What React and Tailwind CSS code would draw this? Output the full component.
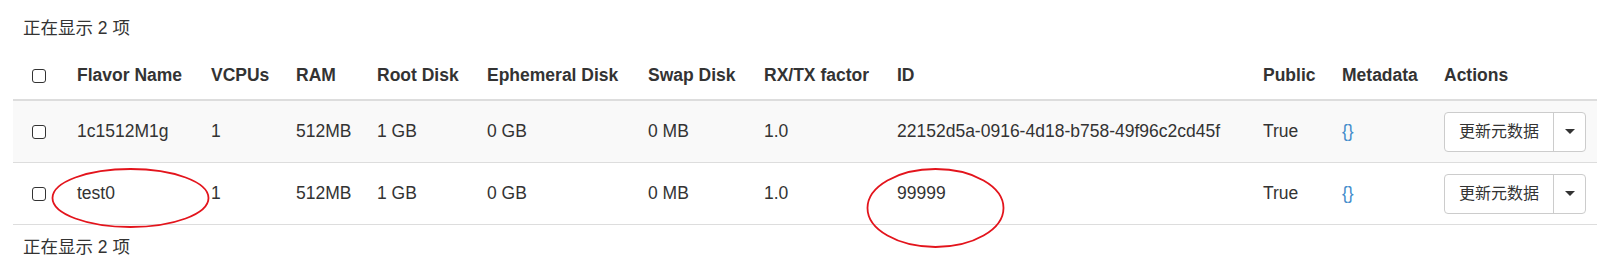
import React from 'react';

const flavors = [
  { name: '1c1512M1g', vcpus: '1', ram: '512MB', root: '1 GB', eph: '0 GB', swap: '0 MB', rxtx: '1.0', id: '22152d5a-0916-4d18-b758-49f96c2cd45f', pub: 'True' },
  { name: 'test0', vcpus: '1', ram: '512MB', root: '1 GB', eph: '0 GB', swap: '0 MB', rxtx: '1.0', id: '99999', pub: 'True' },
];

const Checkbox = () => (
  <span className="inline-block w-[14px] h-[14px] border border-[#333] rounded-[3px] bg-white align-middle" />
);

const headers = ['Flavor Name', 'VCPUs', 'RAM', 'Root Disk', 'Ephemeral Disk', 'Swap Disk', 'RX/TX factor', 'ID', 'Public', 'Metadata', 'Actions'];

export default function App() {
  return (
    <div
      className="relative w-[1597px] h-[259px] bg-white text-[#333] text-[17.5px] leading-[25px] overflow-hidden"
      style={{ fontFamily: '"Liberation Sans", Arial, "Noto Sans CJK SC", sans-serif' }}
    >
      <div className="pt-[16px] pl-[23px]">正在显示 2 项</div>

      <table className="table-fixed border-collapse ml-[13px] mt-[12px] w-[1584px]">
        <colgroup>
          <col className="w-[54px]" />
          <col className="w-[134px]" />
          <col className="w-[85px]" />
          <col className="w-[81px]" />
          <col className="w-[110px]" />
          <col className="w-[161px]" />
          <col className="w-[116px]" />
          <col className="w-[133px]" />
          <col className="w-[366px]" />
          <col className="w-[79px]" />
          <col className="w-[102px]" />
          <col className="w-[163px]" />
        </colgroup>
        <thead>
          <tr className="border-b-[2.5px] border-[#ddd]">
            <th className="pt-[10px] pb-[11px] pl-[19px] text-left align-middle">
              <Checkbox />
            </th>
            {headers.map((h) => (
              <th key={h} className="pt-[10px] pb-[11px] px-[10px] text-left font-bold whitespace-nowrap">
                {h}
              </th>
            ))}
          </tr>
        </thead>
        <tbody>
          {flavors.map((f, i) => (
            <tr key={f.name} className={`border-b border-[#ddd] ${i === 0 ? 'bg-[#f9f9f9]' : 'bg-white'}`}>
              <td className="py-[10.5px] pl-[19px] align-middle">
                <Checkbox />
              </td>
              <td className="px-[10px] align-middle">{f.name}</td>
              <td className="px-[10px] align-middle">{f.vcpus}</td>
              <td className="px-[10px] align-middle">{f.ram}</td>
              <td className="px-[10px] align-middle">{f.root}</td>
              <td className="px-[10px] align-middle">{f.eph}</td>
              <td className="px-[10px] align-middle">{f.swap}</td>
              <td className="px-[10px] align-middle">{f.rxtx}</td>
              <td className="px-[10px] align-middle whitespace-nowrap">{f.id}</td>
              <td className="px-[10px] align-middle">{f.pub}</td>
              <td className="px-[10px] align-middle text-[#428bca]">{'{}'}</td>
              <td className="py-[10.5px] pl-[10px] align-middle">
                <div className="flex h-[40px] w-[142px] border border-[#ccc] rounded-[4px] bg-white">
                  <div className="flex items-center justify-center w-[109px] border-r border-[#ccc] text-[16px]">
                    更新元数据
                  </div>
                  <div className="flex flex-1 items-center justify-center">
                    <span className="w-0 h-0 border-l-[5px] border-r-[5px] border-t-[5px] border-l-transparent border-r-transparent border-t-[#333]" />
                  </div>
                </div>
              </td>
            </tr>
          ))}
        </tbody>
      </table>

      <div className="mt-[10px] pl-[23px]">正在显示 2 项</div>

      <svg className="absolute inset-0 pointer-events-none" width="1597" height="259">
        <ellipse cx="130.5" cy="198" rx="78" ry="29" fill="none" stroke="#e3141c" strokeWidth="1.8" />
        <ellipse cx="935.5" cy="208" rx="68" ry="39" fill="none" stroke="#e3141c" strokeWidth="1.8" />
      </svg>
    </div>
  );
}
